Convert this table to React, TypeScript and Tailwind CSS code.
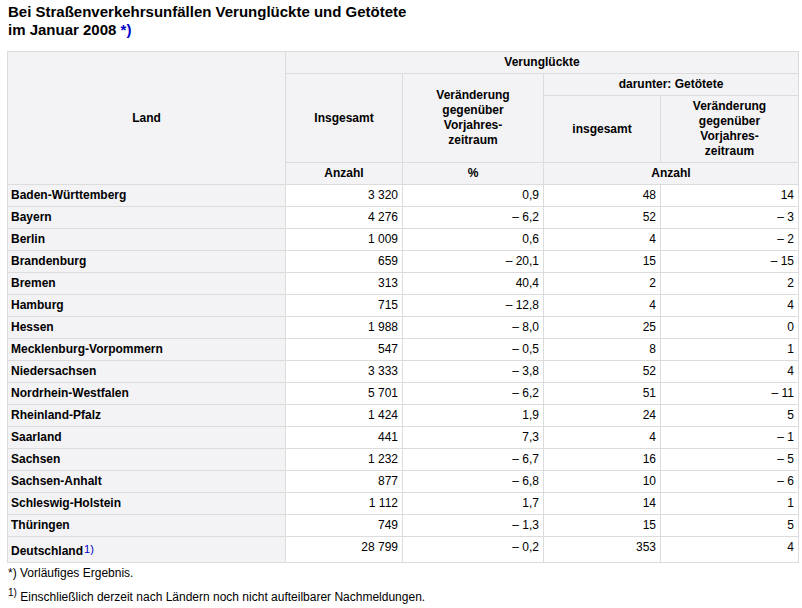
import React from "react";

const rows: [string, string, string, string, string][] = [
  ["Baden-Württemberg", "3 320", "0,9", "48", "14"],
  ["Bayern", "4 276", "– 6,2", "52", "– 3"],
  ["Berlin", "1 009", "0,6", "4", "– 2"],
  ["Brandenburg", "659", "– 20,1", "15", "– 15"],
  ["Bremen", "313", "40,4", "2", "2"],
  ["Hamburg", "715", "– 12,8", "4", "4"],
  ["Hessen", "1 988", "– 8,0", "25", "0"],
  ["Mecklenburg-Vorpommern", "547", "– 0,5", "8", "1"],
  ["Niedersachsen", "3 333", "– 3,8", "52", "4"],
  ["Nordrhein-Westfalen", "5 701", "– 6,2", "51", "– 11"],
  ["Rheinland-Pfalz", "1 424", "1,9", "24", "5"],
  ["Saarland", "441", "7,3", "4", "– 1"],
  ["Sachsen", "1 232", "– 6,7", "16", "– 5"],
  ["Sachsen-Anhalt", "877", "– 6,8", "10", "– 6"],
  ["Schleswig-Holstein", "1 112", "1,7", "14", "1"],
  ["Thüringen", "749", "– 1,3", "15", "5"],
];

const th = "border border-[#dcdcdc] bg-[#f3f2f5] font-bold text-center align-middle px-[3px] py-0 leading-[15px]";
const tdL = "border border-[#dcdcdc] bg-[#f3f2f5] font-bold text-left px-[3px] py-0 leading-[15px]";
const tdN = "border border-[#dcdcdc] bg-white text-right px-[4px] py-0 leading-[15px]";

export default function App() {
  return (
    <div className="w-[802px] h-[608px] bg-white text-black text-[12px] font-['Liberation_Sans',Arial,sans-serif] pl-[7px] pt-[3px]">
      <div className="font-bold text-[15px] leading-[18px] pl-px">
        Bei Straßenverkehrsunfällen Verunglückte und Getötete
        <br />
        im Januar 2008 <span className="text-[#0000cc]">*)</span>
      </div>
      <table className="border-collapse mt-[12px] w-[791px] table-fixed">
        <colgroup>
          <col className="w-[278px]" />
          <col className="w-[117px]" />
          <col className="w-[141px]" />
          <col className="w-[117px]" />
          <col className="w-[138px]" />
        </colgroup>
        <thead>
          <tr>
            <th rowSpan={4} className={th}>Land</th>
            <th colSpan={4} className={th + " h-[22px]"}>Verunglückte</th>
          </tr>
          <tr>
            <th rowSpan={2} className={th}>Insgesamt</th>
            <th rowSpan={2} className={th}>
              Veränderung
              <br />
              gegenüber
              <br />
              Vorjahres-
              <br />
              zeitraum
            </th>
            <th colSpan={2} className={th + " h-[22px]"}>darunter: Getötete</th>
          </tr>
          <tr>
            <th className={th + " h-[67px]"}>insgesamt</th>
            <th className={th + " h-[67px]"}>
              Veränderung
              <br />
              gegenüber
              <br />
              Vorjahres-
              <br />
              zeitraum
            </th>
          </tr>
          <tr>
            <th className={th + " h-[22px]"}>Anzahl</th>
            <th className={th + " h-[22px]"}>%</th>
            <th colSpan={2} className={th + " h-[22px]"}>Anzahl</th>
          </tr>
        </thead>
        <tbody>
          {rows.map((r) => (
            <tr key={r[0]}>
              <td className={tdL + " h-[22px]"}>{r[0]}</td>
              <td className={tdN + " h-[22px]"}>{r[1]}</td>
              <td className={tdN + " h-[22px]"}>{r[2]}</td>
              <td className={tdN + " h-[22px]"}>{r[3]}</td>
              <td className={tdN + " h-[22px]"}>{r[4]}</td>
            </tr>
          ))}
          <tr>
            <td className={tdL + " h-[26px] align-bottom pb-[3px]"}>
              Deutschland
              <sup className="text-[#0000cc] font-normal text-[11px] relative top-[-2px] ml-px">1)</sup>
            </td>
            <td className={tdN + " h-[26px] pb-[4px]"}>28 799</td>
            <td className={tdN + " h-[26px] pb-[4px]"}>– 0,2</td>
            <td className={tdN + " h-[26px] pb-[4px]"}>353</td>
            <td className={tdN + " h-[26px] pb-[4px]"}>4</td>
          </tr>
        </tbody>
      </table>
      <div className="pl-px mt-[3px] leading-[15px]">*) Vorläufiges Ergebnis.</div>
      <div className="pl-px mt-[9px] leading-[15px]">
        <sup className="text-[10px]">1)</sup> Einschließlich derzeit nach Ländern noch nicht aufteilbarer Nachmeldungen.
      </div>
    </div>
  );
}
